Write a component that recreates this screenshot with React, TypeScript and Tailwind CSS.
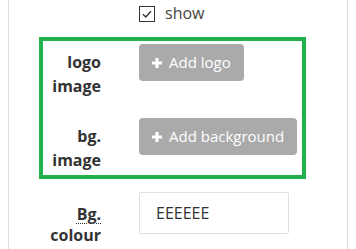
import React from "react";

function Plus() {
  return (
    <svg width="10" height="10" viewBox="0 0 10 10" className="shrink-0">
      <rect x="3.5" y="0" width="3" height="10" fill="white" />
      <rect x="0" y="3.5" width="10" height="3" fill="white" />
    </svg>
  );
}

export default function App() {
  return (
    <div
      className="w-[356px] h-[249px] bg-white overflow-hidden"
      style={{ fontFamily: '"Open Sans", "Liberation Sans", sans-serif' }}
    >
      <div className="mx-[8px] h-full border-l border-r border-[#dddddd]">
        {/* show checkbox */}
        <div className="flex items-center pl-[130px] pt-[1px] h-[25px]">
          <div className="w-[16px] h-[16px] border-[1.5px] border-[#333333] flex items-center justify-center mt-[2px]">
            <svg width="12" height="12" viewBox="0 0 12 12">
              <path d="M2 6.2 L4.8 9 L10 3.2" fill="none" stroke="#333333" strokeWidth="1.4" />
            </svg>
          </div>
          <span className="ml-[10px] text-[16px] leading-[24px] text-[#444444]">show</span>
        </div>

        {/* highlighted group */}
        <div className="ml-[30px] mt-[12px] w-[267px] border-[4px] border-[#22b14c] pt-[3px] pb-[3px]">
          <div className="flex">
            <div className="w-[58px] pt-[6px] text-right font-bold text-[16px] leading-[24px] text-[#333333]">
              logo image
            </div>
            <div className="ml-[38px]">
              <div className="h-[37px] px-[13px] rounded-[4px] bg-[#aaaaaa] flex items-center gap-[7px] text-white text-[15px] w-max">
                <Plus />
                <span>Add logo</span>
              </div>
            </div>
          </div>
          <div className="flex mt-[20px]">
            <div className="w-[58px] pt-[6px] text-right font-bold text-[16px] leading-[24px] text-[#333333]">
              bg. image
            </div>
            <div className="ml-[38px]">
              <div className="h-[37px] px-[13px] rounded-[4px] bg-[#aaaaaa] flex items-center gap-[7px] text-white text-[15px] w-max">
                <Plus />
                <span>Add background</span>
              </div>
            </div>
          </div>
        </div>

        {/* bg colour */}
        <div className="flex ml-[34px] mt-[13px]">
          <div className="w-[58px] pt-[12px] text-right font-bold text-[16px] leading-[21px] text-[#333333]">
            <span className="underline decoration-dotted decoration-[1px] underline-offset-[3px]">Bg.</span>
            <br />
            colour
          </div>
          <div className="ml-[38px]">
            <div className="w-[150px] h-[42px] border border-[#e0e0e0] rounded-[2px] flex items-center pl-[16px] text-[16px] text-[#333333]">
              EEEEEE
            </div>
          </div>
        </div>
      </div>
    </div>
  );
}
